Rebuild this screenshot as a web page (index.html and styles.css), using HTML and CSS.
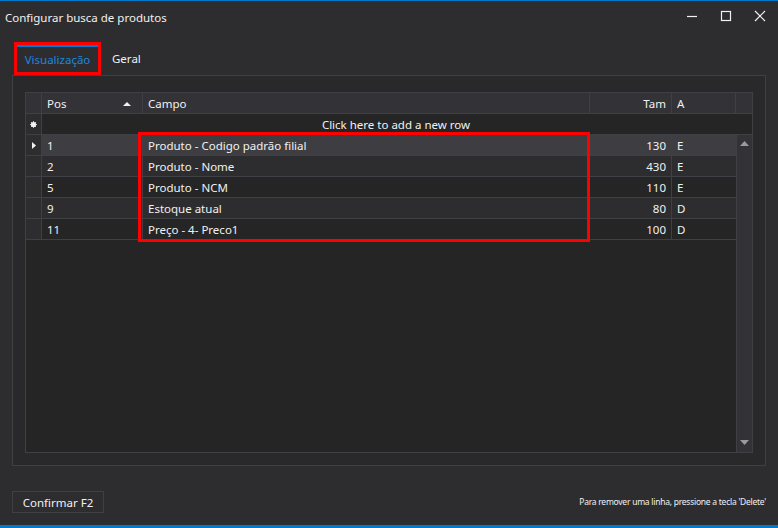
FILE: index.html
```html
<!DOCTYPE html>
<html lang="pt">
<head>
<meta charset="utf-8">
<title>Configurar busca de produtos</title>
<link rel="stylesheet" href="styles.css">
</head>
<body>
<div class="window">
  <div class="topline"></div>
  <div class="titlebar">
    <span class="title">Configurar busca de produtos</span>
    <div class="controls">
      <svg class="ctl" width="12" height="12" viewBox="0 0 12 12"><path d="M1 6.5H11" stroke="#f1f1f1" stroke-width="1.2" fill="none"/></svg>
      <svg class="ctl" width="12" height="12" viewBox="0 0 12 12"><rect x="1.5" y="1.5" width="9" height="9" stroke="#f1f1f1" stroke-width="1.2" fill="none"/></svg>
      <svg class="ctl" width="12" height="12" viewBox="0 0 12 12"><path d="M1 1L11 11M11 1L1 11" stroke="#f1f1f1" stroke-width="1.2" fill="none"/></svg>
    </div>
  </div>

  <div class="tabs">
    <div class="tab active">Visualização</div>
    <div class="tab">Geral</div>
    <div class="mark tabmark"></div>
  </div>

  <div class="panel">
    <div class="grid">
      <div class="row header">
        <div class="cell rh"></div>
        <div class="cell c-pos">Pos<svg class="sort" width="8" height="5" viewBox="0 0 8 5"><path d="M0 5L4 1L8 5Z" fill="#f1f1f1"/></svg></div>
        <div class="cell c-campo">Campo</div>
        <div class="cell c-tam">Tam</div>
        <div class="cell c-a">A</div>
        <div class="cell c-sb"></div>
      </div>
      <div class="row newrow">
        <div class="cell rh"><svg width="7" height="7" viewBox="0 0 7 7"><circle cx="3.5" cy="3.5" r="2.6" fill="#f1f1f1"/><path d="M3.5 0V7M0 3.5H7M1 1L6 6M6 1L1 6" stroke="#f1f1f1" stroke-width="0.8"/></svg></div>
        <div class="newtext">Click here to add a new row</div>
      </div>
      <div class="body">
        <div class="rows">
          <div class="row data sel">
            <div class="cell rh"><svg width="4" height="7" viewBox="0 0 4 7"><path d="M0 0L4 3.5L0 7Z" fill="#f1f1f1"/></svg></div>
            <div class="cell c-pos">1</div>
            <div class="cell c-campo">Produto - Codigo padrão filial</div>
            <div class="cell c-tam">130</div>
            <div class="cell c-a">E</div>
          </div>
          <div class="row data alt">
            <div class="cell rh"></div>
            <div class="cell c-pos">2</div>
            <div class="cell c-campo">Produto - Nome</div>
            <div class="cell c-tam">430</div>
            <div class="cell c-a">E</div>
          </div>
          <div class="row data">
            <div class="cell rh"></div>
            <div class="cell c-pos">5</div>
            <div class="cell c-campo">Produto - NCM</div>
            <div class="cell c-tam">110</div>
            <div class="cell c-a">E</div>
          </div>
          <div class="row data alt">
            <div class="cell rh"></div>
            <div class="cell c-pos">9</div>
            <div class="cell c-campo">Estoque atual</div>
            <div class="cell c-tam">80</div>
            <div class="cell c-a">D</div>
          </div>
          <div class="row data">
            <div class="cell rh"></div>
            <div class="cell c-pos">11</div>
            <div class="cell c-campo">Preço - 4- Preco1</div>
            <div class="cell c-tam">100</div>
            <div class="cell c-a">D</div>
          </div>
        </div>
        <div class="scrollbar">
          <svg width="9" height="5" viewBox="0 0 9 5"><path d="M0 5L4.5 0L9 5Z" fill="#9a9a9e"/></svg>
          <svg width="9" height="5" viewBox="0 0 9 5"><path d="M0 0L4.5 5L9 0Z" fill="#9a9a9e"/></svg>
        </div>
      </div>
      <div class="mark gridmark"></div>
    </div>
  </div>

  <div class="footer">
    <button class="btn">Confirmar F2</button>
    <span class="hint">Para remover uma linha, pressione a tecla 'Delete'</span>
  </div>
  <div class="bottomline"></div>
</div>
</body>
</html>
```

FILE: styles.css
```css
* { box-sizing: border-box; }
html, body { margin: 0; padding: 0; }
body {
  width: 778px;
  height: 528px;
  background: #2d2d30;
  font-family: "Segoe UI", "Noto Sans", "Open Sans", sans-serif;
  color: #f1f1f1;
  overflow: hidden;
}
.window {
  width: 778px;
  height: 528px;
  display: flex;
  flex-direction: column;
}
.topline { height: 1px; background: #007acc; flex: none; }
.bottomline { height: 3px; background: #007acc; flex: none; }

.titlebar {
  height: 33px;
  flex: none;
  display: flex;
  align-items: center;
  justify-content: space-between;
  padding: 0 12px 0 5px;
}
.title { font-size: 11.5px; margin-top: -1px; }
.controls { display: flex; gap: 22px; margin-top: -4px; }
.ctl { display: block; }

.tabs {
  position: relative;
  height: 41px;
  flex: none;
  display: flex;
  align-items: flex-end;
  padding-left: 14px;
}
.tab {
  height: 30px;
  display: flex;
  align-items: center;
  padding: 0 10px 4px;
  font-size: 11.5px;
  color: #f1f1f1;
}
.tab.active {
  width: 87px;
  color: #1f86d9;
  border-top: 2px solid #007acc;
  justify-content: center;
  padding: 0 0 4px;
}
.tab + .tab { padding-left: 11px; }

.mark {
  position: absolute;
  border: 3px solid #ff0000;
  pointer-events: none;
}
.tabmark { left: 14px; top: 8px; width: 87px; height: 33px; }

.panel {
  flex: none;
  height: 391px;
  margin: 0 12px;
  border: 1px solid #3f3f46;
  background: #29292c;
  padding: 16px 12px 12px 12px;
}
.grid {
  position: relative;
  height: 100%;
  border: 1px solid #3f3f46;
  background: #252526;
  display: flex;
  flex-direction: column;
  font-size: 11.5px;
}
.row { display: flex; height: 21px; flex: none; }
.cell {
  height: 100%;
  display: flex;
  align-items: center;
  border-right: 1px solid #3f3f46;
  border-bottom: 1px solid #3f3f46;
  padding: 0 5px;
  white-space: nowrap;
}
.rh { width: 16px; padding: 0; justify-content: center; background: #2d2d30; }
.c-pos { width: 101px; }
.c-campo { width: 447px; }
.c-tam { width: 82px; justify-content: flex-end; }
.c-a { width: 64px; }
.c-sb { flex: 1; border-right: none; }

.header { height: 21px; background: #333337; }
.header .rh { background: #333337; }
.header .c-pos { justify-content: space-between; }
.sort { margin-right: 6px; }

.newrow { background: #252526; }
.newrow .rh { background: #2d2d30; }
.newtext {
  flex: 1;
  text-align: center;
  border-bottom: 1px solid #3f3f46;
  display: flex;
  align-items: center;
  justify-content: center;
  padding-right: 2px;
}

.body { flex: 1; display: flex; min-height: 0; }
.rows { flex: none; width: 710px; }
.data { background: #252526; }
.data.alt { background: #2d2d30; }
.data.sel { background: #3e3e42; }
.data .rh { background: #2d2d30; }
.data .c-a { border-right: none; }

.scrollbar {
  flex: 1;
  background: #333337;
  border-left: 1px solid #3f3f46;
  display: flex;
  flex-direction: column;
  justify-content: space-between;
  align-items: center;
  padding: 6px 0 7px;
}
.scrollbar svg { display: block; }

.gridmark { left: 112px; top: 39px; width: 452px; height: 110px; }

.footer {
  flex: 1;
  display: flex;
  align-items: flex-start;
  justify-content: space-between;
  padding: 25px 12px 0 12px;
}
.btn {
  width: 92px;
  height: 22px;
  background: #2d2d30;
  border: 1px solid #3f3f46;
  color: #f1f1f1;
  font-family: inherit;
  font-size: 11.5px;
  padding: 0;
}
.hint {
  height: 22px;
  line-height: 22px;
  font-size: 8.5px;
  color: #f1f1f1;
  letter-spacing: -0.25px;
}
```
